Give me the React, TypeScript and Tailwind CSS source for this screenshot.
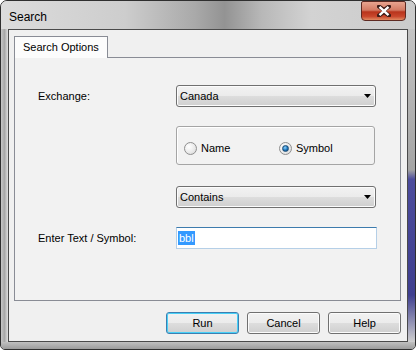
import React from "react";

const font = "font-['Liberation_Sans',Arial,sans-serif]";

function Combo({ value }: { value: string }) {
  return (
    <div className="w-[200px] h-[22px] rounded-[3px] border border-[#707070] bg-[linear-gradient(to_bottom,#f2f2f2_0%,#ebebeb_50%,#dddddd_51%,#cfcfcf_100%)] flex items-center justify-between pl-[3px] pr-[4px] shadow-[inset_0_0_0_1px_#fcfcfc]">
      <span className="text-[11px] text-black">{value}</span>
      {/* arrow */}
      <svg width="7" height="4" viewBox="0 0 7 4">
        <path d="M0 0h7L3.5 4z" fill="#000" />
      </svg>
    </div>
  );
}

function Radio({ checked, label }: { checked?: boolean; label: string }) {
  return (
    <div className="flex items-center gap-[4px]">
      <div className="w-[13px] h-[13px] rounded-full border border-[#8f8f8f] bg-[radial-gradient(circle_at_35%_35%,#ffffff_0%,#e8e8e8_60%,#cfcfcf_100%)] flex items-center justify-center">
        {checked && (
          <div className="w-[7px] h-[7px] rounded-full bg-[radial-gradient(circle_at_40%_35%,#8fd4ff_0%,#1a72b8_55%,#0b3d6b_100%)] border border-[#1e4d74]" />
        )}
      </div>
      <span className="text-[11px] text-black">{label}</span>
    </div>
  );
}

function Btn({ label, focused }: { label: string; focused?: boolean }) {
  return (
    <button
      className={
        "w-[73px] h-[22px] rounded-[3px] border text-[11px] text-black bg-[linear-gradient(to_bottom,#f2f2f2_0%,#ebebeb_50%,#dddddd_51%,#cfcfcf_100%)] " +
        (focused
          ? "border-[#3c7fb1] shadow-[inset_0_0_0_1px_#48d0f7]"
          : "border-[#707070] shadow-[inset_0_0_0_1px_#fbfbfb]")
      }
    >
      {label}
    </button>
  );
}

export default function App() {
  return (
    <div className={`w-[416px] h-[350px] ${font} bg-white`}>
      <div className="w-[416px] h-[350px] rounded-t-[7px] rounded-b-[5px] border border-[#2f2f2f] flex flex-col overflow-hidden bg-[linear-gradient(to_bottom,#d4d4d4_0%,#bcbcbc_40%,#b4b4b4_100%)]">
        {/* TITLE BAR */}
        <div className="h-[28px] flex items-start justify-between bg-[linear-gradient(to_right,#dcdcdc_0%,#cdcdcd_30%,#a9a9a9_47%,#939393_54%,#b8b8b8_63%,#d3d3d3_75%,#cbcbcb_100%)]">
          <span className="ml-[8px] mt-[7px] text-[12px] text-black">Search</span>
          <div className="mr-[9px] w-[45px] h-[20px] rounded-b-[4px] rounded-t-[2px] border border-[#5e2a22] bg-[linear-gradient(to_bottom,#e8a48f_0%,#d37a63_45%,#b8341c_55%,#c9472c_80%,#e08a62_100%)] flex items-center justify-center">
            <svg width="14" height="12" viewBox="0 0 14 12">
              <path
                d="M2 1.5 L7 5 L12 1.5 M2 10.5 L7 7 L12 10.5"
                fill="none"
                stroke="#3a1a16"
                strokeWidth="4"
                strokeLinecap="round"
              />
              <path
                d="M2.5 1.8 L11.5 10.2 M11.5 1.8 L2.5 10.2"
                fill="none"
                stroke="#ffffff"
                strokeWidth="2.4"
              />
            </svg>
          </div>
        </div>

        {/* BODY */}
        <div className="flex flex-1">
          <div className="w-[7px] bg-[linear-gradient(to_right,#c8c8c8,#a8a8a8,#e0e0e0)]" />
          <div className="flex-1 border border-[#4a4a4a] bg-[#f0f0f0] flex flex-col px-[5px] pt-[6px]">
            {/* TAB */}
            <div className="flex">
              <div className="h-[22px] px-[8px] flex items-center border border-b-0 border-[#898c95] bg-[#fcfcfc] text-[11px] text-black -mb-px relative">
                Search Options
              </div>
            </div>
            <div className="w-[387px] h-[244px] border border-[#898c95] bg-[#f2f2f2] flex flex-col pl-[23px] pt-[27px]">
              <div className="flex items-center">
                <span className="w-[138px] text-[11px] text-black">Exchange:</span>
                <Combo value="Canada" />
              </div>
              <div className="flex mt-[19px]">
                <div className="w-[138px]" />
                <div className="w-[199px] h-[39px] rounded-[3px] border border-[#a5a5a5] shadow-[inset_1px_1px_0_#ffffff] flex items-center pt-[6px] pl-[7px]">
                  <div className="w-[95px]">
                    <Radio label="Name" />
                  </div>
                  <Radio label="Symbol" checked />
                </div>
              </div>
              <div className="flex mt-[21px]">
                <div className="w-[138px]" />
                <Combo value="Contains" />
              </div>
              <div className="flex items-center mt-[19px]">
                <span className="w-[138px] text-[11px] text-black">Enter Text / Symbol:</span>
                <div className="w-[201px] h-[22px] bg-white border border-[#b5cfe7] border-t-[#3d7bad] flex items-center pl-[1px]">
                  <span className="bg-[#3399ff] text-white text-[11px] leading-[14px] px-px">bbl</span>
                </div>
              </div>
            </div>
            {/* BUTTONS */}
            <div className="flex justify-end gap-[8px] mt-[11px] pr-[1px]">
              <Btn label="Run" focused />
              <Btn label="Cancel" />
              <Btn label="Help" />
            </div>
          </div>
          <div className="w-[7px] bg-[linear-gradient(to_bottom,#c4c4c4_0%,#a4a4a4_45%,#4c4c9c_48%,#3f3f8f_85%,#cfcfcf_100%)]" />
        </div>
        <div className="h-[7px] bg-[linear-gradient(to_bottom,#c0c0c0,#9c9c9c)]" />
      </div>
    </div>
  );
}
